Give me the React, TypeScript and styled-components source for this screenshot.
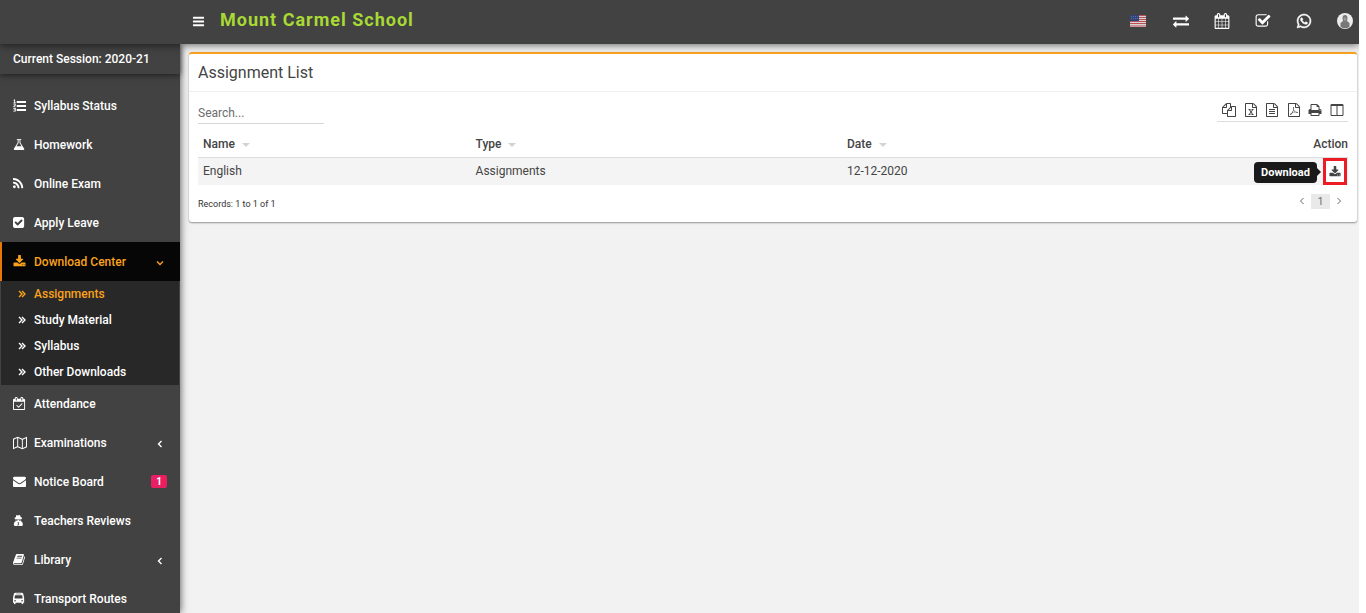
import React from "react";
import styled, { createGlobalStyle, css } from "styled-components";
import { FaWhatsapp } from "react-icons/fa";

const ORANGE = "#faa21c";

const GlobalStyle = createGlobalStyle`
  *, *::before, *::after { box-sizing: border-box; }
  html, body { margin: 0; height: 100%; overflow: hidden; background: #fff; }
  #root { height: 100%; }
  body { font-family: Roboto, "Liberation Sans", sans-serif; font-size: 12px; color: #444; }
  ul { list-style: none; margin: 0; padding: 0; }
  a { color: inherit; text-decoration: none; }
  button { font: inherit; color: inherit; background: none; border: 0; padding: 0; cursor: pointer; }
`;

/* ---------- icons (1792-unit grid) ---------- */

const PAGE =
  "M1596 380q28 28 48 76t20 88v1152q0 40-28 68t-68 28h-1344q-40 0-68-28t-28-68v-1600q0-40 28-68t68-28h896q40 0 88 20t76 48zm-444-244v376h376q-10-29-22-41l-313-313q-12-12-41-22zm384 1528v-1024h-416q-40 0-68-28t-28-68v-416h-768v1536h1280z";

const PATHS = {
  bars: "M1664 1344v128q0 26-19 45t-45 19h-1408q-26 0-45-19t-19-45v-128q0-26 19-45t45-19h1408q26 0 45 19t19 45zm0-512v128q0 26-19 45t-45 19h-1408q-26 0-45-19t-19-45v-128q0-26 19-45t45-19h1408q26 0 45 19t19 45zm0-512v128q0 26-19 45t-45 19h-1408q-26 0-45-19t-19-45v-128q0-26 19-45t45-19h1408q26 0 45 19t19 45z",
  listOl: "M512 276h1280v276h-1280zM512 827h1280v276h-1280zM512 1378h1280v276h-1280zM150 60h140v420h100v90h-340v-90h110v-260h-90v-70zM50 660h320v240l-180 160h190v90h-330v-140l200-180v-80h-200zM40 1240h340v480h-340v-90h200v-110h-140v-80h140v-110h-200z",
  exchange: "M1792 1184v192q0 13-9.5 22.5t-22.5 9.5h-1376v192q0 13-9.5 22.5t-22.5 9.5q-12 0-24-10l-319-320q-9-9-9-22 0-14 9-23l320-320q9-9 23-9 13 0 22.5 9.5t9.5 22.5v192h1376q13 0 22.5 9.5t9.5 22.5zm0-544q0 14-9 23l-320 320q-9 9-23 9-13 0-22.5-9.5t-9.5-22.5v-192h-1376q-13 0-22.5-9.5t-9.5-22.5v-192q0-13 9.5-22.5t22.5-9.5h1376v-192q0-14 9-23t23-9q12 0 24 10l319 319q9 9 9 23z",
  calendar: "M192 1664h288v-288h-288v288zm352 0h320v-288h-320v288zm-352-352h288v-320h-288v320zm352 0h320v-320h-320v320zm-352-384h288v-288h-288v288zm736 736h320v-288h-320v288zm-384-736h320v-288h-320v288zm768 736h288v-288h-288v288zm-384-352h320v-320h-320v320zm-352-864v-288q0-13-9.5-22.5t-22.5-9.5h-64q-13 0-22.5 9.5t-9.5 22.5v288q0 13 9.5 22.5t22.5 9.5h64q13 0 22.5-9.5t9.5-22.5zm736 864h288v-320h-288v320zm-384-384h320v-288h-320v288zm384 0h288v-288h-288v288zm32-480v-288q0-13-9.5-22.5t-22.5-9.5h-64q-13 0-22.5 9.5t-9.5 22.5v288q0 13 9.5 22.5t22.5 9.5h64q13 0 22.5-9.5t9.5-22.5zm384-64v1280q0 52-38 90t-90 38h-1408q-52 0-90-38t-38-90v-1280q0-52 38-90t90-38h128v-96q0-66 47-113t113-47h64q66 0 113 47t47 113v96h384v-96q0-66 47-113t113-47h64q66 0 113 47t47 113v96h128q52 0 90 38t38 90z",
  checkOutline: "M1472 930v318q0 119-84.5 203.5t-203.5 84.5h-832q-119 0-203.5-84.5t-84.5-203.5v-832q0-119 84.5-203.5t203.5-84.5h832q63 0 117 25 15 7 18 23 3 17-9 29l-49 49q-10 10-23 10-3 0-9-2-23-6-45-6h-832q-66 0-113 47t-47 113v832q0 66 47 113t113 47h832q66 0 113-47t47-113v-254q0-13 9-22l64-64q10-10 23-10 6 0 12 3 20 8 20 29zm231-489l-814 814q-24 24-57 24t-57-24l-430-430q-24-24-24-57t24-57l110-110q24-24 57-24t57 24l263 263 647-647q24-24 57-24t57 24l110 110q24 24 24 57t-24 57z",
  copy: "M1696 384q40 0 68 28t28 68v1216q0 40-28 68t-68 28h-960q-40 0-68-28t-28-68v-288h-544q-40 0-68-28t-28-68v-672q0-40 20-88t48-76l408-408q28-28 76-48t88-20h416q40 0 68 28t28 68v328q68-40 128-40h416zm-544 213l-299 299h299v-299zm-640-384l-299 299h299v-299zm196 647l316-316v-416h-384v416q0 40-28 68t-68 28h-416v640h512v-256q0-40 20-88t48-76zm956 804v-1152h-384v416q0 40-28 68t-68 28h-416v640h896z",
  excel: PAGE + "m-979-234v106h281v-106h-75l103-161q5-7 10-16.500t7.500-13.500 3.500-4h2q1 4 5 10 2 4 4.500 7.500t6 8 6.500 8.500l107 161h-76v106h291v-106h-68l-192-273 195-282h67v-107h-279v107h74l-103 159q-4 7-10 16.500t-9 13.500l-2 3h-2q-1-4-5-10-6-11-17-23l-106-159h76v-107h-290v107h68l189 272-194 283h-68z",
  text: PAGE + "m-1024-864q0-14 9-23t23-9h704q14 0 23 9t9 23v64q0 14-9 23t-23 9h-704q-14 0-23-9t-9-23v-64zm736 224q14 0 23 9t9 23v64q0 14-9 23t-23 9h-704q-14 0-23-9t-9-23v-64q0-14 9-23t23-9h704zm0 256q14 0 23 9t9 23v64q0 14-9 23t-23 9h-704q-14 0-23-9t-9-23v-64q0-14 9-23t23-9h704z",
  pdf: PAGE + "m-514-593q33 26 84 56 59-7 117-7 147 0 177 49 16 22 2 52 0 1-1 2l-2 2v1q-6 38-71 38-48 0-115-20t-130-53q-221 24-392 83-153 262-242 262-15 0-28-7l-24-12q-1-1-6-5-10-10-6-36 9-40 56-91.500t132-96.500q14-9 23 6 2 2 2 4 52-85 107-197 68-136 104-262-24-82-30.500-159.500t6.500-127.500q11-40 42-40h22q23 0 35 15 18 21 9 68-2 6-4 8 1 3 1 8v30q-2 123-14 192 55 164 146 238zm-576 411q52-24 137-158-51 40-87.500 84t-49.500 74zm398-920q-15 42-2 132 1-7 7-44 0-3 7-43 1-4 4-8-1-1-1-2-1-2-1-3-1-22-13-36 0 1-1 2v2zm-124 661q135-54 284-81-2-1-13-9.500t-16-13.500q-76-67-127-176-27 86-83 197-30 56-45 83zm646-16q-24-24-140-24 76 28 124 28 14 0 18-1 0-1-2-3z",
  print: "M448 1536h896v-256h-896v256zm0-640h896v-384h-160q-40 0-68-28t-28-68v-160h-640v640zm1152 64q0-26-19-45t-45-19-45 19-19 45 19 45 45 19 45-19 19-45zm128 0v416q0 13-9.500 22.500t-22.500 9.500h-224v160q0 40-28 68t-68 28h-960q-40 0-68-28t-28-68v-160h-224q-13 0-22.500-9.500t-9.500-22.500v-416q0-79 56.500-135.500t135.500-56.500h64v-544q0-40 28-68t68-28h672q40 0 88 20t76 48l152 152q28 28 48 76t20 88v256h64q79 0 135.500 56.500t56.500 135.500z",
  columns: "M224 1536h608v-1152h-640v1120q0 13 9.500 22.500t22.500 9.500zm1376-32v-1120h-640v1152h608q13 0 22.500-9.500t9.500-22.500zm128-1216v1216q0 66-47 113t-113 47h-1344q-66 0-113-47t-47-113v-1216q0-66 47-113t113-47h1344q66 0 113 47t47 113z",
  download: "M1344 1344q0-26-19-45t-45-19-45 19-19 45 19 45 45 19 45-19 19-45zm256 0q0-26-19-45t-45-19-45 19-19 45 19 45 45 19 45-19 19-45zm128-224v320q0 40-28 68t-68 28h-1472q-40 0-68-28t-28-68v-320q0-40 28-68t68-28h465l135 136q58 56 136 56t136-56l136-136h464q40 0 68 28t28 68zm-325-569q17 41-14 70l-448 448q-18 19-45 19t-45-19l-448-448q-31-29-14-70 17-39 59-39h256v-448q0-26 19-45t45-19h256q26 0 45 19t19 45v448h256q42 0 59 39z",
  flask: "M1591 1448q56 89 21.500 152.500t-140.500 63.500h-1152q-106 0-140.500-63.500t21.500-152.500l503-793v-399h-64q-26 0-45-19t-19-45 19-45 45-19h512q26 0 45 19t19 45-19 45-45 19h-64v399zm-779-725l-272 429h712l-272-429-20-31v-436h-128v436z",
  rss: "M576 1344q0 80-56 136t-136 56-136-56-56-136 56-136 136-56 136 56 56 136zm512 123q2 28-17 48-18 21-47 21h-135q-25 0-43-16.500t-20-41.500q-22-229-184.500-391.500t-391.500-184.500q-25-2-41.500-20t-16.500-43v-135q0-29 21-47 17-17 43-17h5q160 13 306 80.500t259 181.500q114 113 181.500 259t80.500 306zm512 2q2 27-18 47-18 20-46 20h-143q-26 0-44.500-17.500t-19.500-42.500q-12-215-101-408.500t-231.500-336-336-231.500-408.500-102q-25-1-42.500-19.500t-17.500-43.500v-143q0-28 20-46 18-18 44-18h3q262 13 501.500 120t425.500 294q187 186 294 425.500t120 501.500z",
  checkSolid: "M813 1299l614-614q19-19 19-45t-19-45l-102-102q-19-19-45-19t-45 19l-467 467-211-211q-19-19-45-19t-45 19l-102 102q-19 19-19 45t19 45l358 358q19 19 45 19t45-19zm851-883v960q0 119-84.500 203.500t-203.500 84.500h-960q-119 0-203.500-84.500t-84.500-203.500v-960q0-119 84.500-203.500t203.500-84.500h960q119 0 203.500 84.500t84.500 203.500z",
  calendarCheck: "M1303 964l-512 512q-10 9-23 9t-23-9l-288-288q-9-10-9-23t9-22l46-46q9-9 22-9t23 9l220 220 444-444q10-9 23-9t22 9l46 46q9 9 9 22t-9 23zm-1175 700h1408v-1024h-1408v1024zm384-1216v-288q0-14-9-23t-23-9h-64q-14 0-23 9t-9 23v288q0 14 9 23t23 9h64q14 0 23-9t9-23zm768 0v-288q0-14-9-23t-23-9h-64q-14 0-23 9t-9 23v288q0 14 9 23t23 9h64q14 0 23-9t9-23zm384-64v1280q0 52-38 90t-90 38h-1408q-52 0-90-38t-38-90v-1280q0-52 38-90t90-38h128v-96q0-66 47-113t113-47h64q66 0 113 47t47 113v96h384v-96q0-66 47-113t113-47h64q66 0 113 47t47 113v96h128q52 0 90 38t38 90z",
  map: "M0 352l600-256 596 256 596-256v1344l-596 256-596-256-600 256zM128 436v1066l412-176v-1066zM660 260v1066l476 204v-1066zM1256 464v1066l408-176v-1066z",
  envelope: "M1792 710v794q0 66-47 113t-113 47h-1472q-66 0-113-47t-47-113v-794q44 49 101 87 362 246 497 345 57 42 92.500 65.500t94.500 48 110 24.500h2q51 0 110-24.500t94.500-48 92.500-65.500q170-123 498-345 57-39 100-87zm0-294q0 79-49 151t-122 123q-376 261-468 325-10 7-42.500 30.500t-54 38-52 32.500-57.500 27-50 9h-2q-23 0-50-9t-57.500-27-52-32.500-54-38-42.500-30.500q-91-64-262-182.500t-205-142.500q-62-42-117-115.500t-55-136.500q0-78 41.500-130t118.500-52h1472q65 0 112.500 47t47.500 113z",
  secret: "M620 128q90 0 148 50t128 0 148-50q130 0 190 330 190 40 190 118 0 64-140 108q20 150-60 290q300 80 300 460 0 230-220 230h-816q-220 0-220-230 0-380 300-460-80-140-60-290-140-44-140-108 0-78 190-118 60-330 62-330zM560 740v90q0 90 120 90t150-110h132q30 110 150 110t120-90v-90q-336 60-672 0zM760 1120l90 130-70 370h60l56-240 56 240h60l-70-370 90-130z",
  book: "M1703 478q40 57 18 129l-275 906q-19 64-76.500 107.500t-122.500 43.500h-923q-77 0-148.500-53.500t-99.500-131.500q-24-67-2-127 0-4 3-27t4-37q1-8-3-21.500t-3-19.500q2-11 8-21t16.500-23.500 16.500-23.500q23-38 45-91.500t30-91.500q3-10 .5-30t-.5-28q3-11 17-28t17-23q21-36 42-92t25-90q1-9-2.500-32t.5-28q4-13 22-30.500t22-22.500q19-26 42.500-84.500t27.500-96.500q1-8-3-25.500t-2-26.500q2-8 9-18t18-23 17-21q8-12 16.500-30.500t15-35 16-36 19.500-32 26.500-23.500 36-11.500 47.500 5.500l-1 3q38-9 51-9h761q74 0 114 56t18 130l-274 906q-36 119-71.500 153.500t-128.500 34.500h-869q-27 0-38 15-11 16-1 43 24 70 144 70h923q29 0 56-15.500t35-41.500l300-987q7-22 5-57 38 15 59 43zm-1064 2q-4 13 2 22.500t20 9.500h608q13 0 25.500-9.500t16.500-22.500l21-64q4-13-2-22.500t-20-9.500h-608q-13 0-25.500 9.500t-16.500 22.500zm-83 256q-4 13 2 22.500t20 9.500h608q13 0 25.500-9.500t16.500-22.500l21-64q4-13-2-22.500t-20-9.500h-608q-13 0-25.500 9.500t-16.500 22.500z",
  bus: "M480 96h832q190 0 230 160l90 400q32 60 32 200v616h-128v128q0 96-112 96t-112-96v-128h-832v128q0 96-112 96t-112-96v-128h-128v-616q0-140 32-200l90-400q40-160 230-160zM560 240v80h672v-80zM430 448q-24 0-30 28l-70 364q-6 56 40 56h1052q46 0 40-56l-70-364q-6-28-30-28zM416 1088a112 112 0 1 0 0 224a112 112 0 1 0 0-224zM1376 1088a112 112 0 1 0 0 224a112 112 0 1 0 0-224z",
};

type IconName = keyof typeof PATHS;

/* Left edge of the glyph, so that narrow glyphs line up on the same side. */
const LEFT: Partial<Record<IconName, number>> = {
  flask: 64, rss: 192, checkSolid: 128, bus: 128, book: 64, secret: 160,
};

const EVEN_ODD: IconName[] = ["map", "bus", "secret"];

const Glyph = ({ name, size = 14 }: { name: IconName; size?: number }) => (
  <svg width={size} height={size} viewBox={`${LEFT[name] ?? 0} 0 1792 1792`} fill="currentColor" fillRule={EVEN_ODD.includes(name) ? "evenodd" : "nonzero"} aria-hidden="true">
    <path d={PATHS[name]} />
  </svg>
);

const Angle = ({ dir, weight = 1.4 }: { dir: "left" | "down" | "right"; weight?: number }) => (
  <svg width="8" height="8" viewBox="0 0 8 8" fill="none" stroke="currentColor" strokeWidth={weight} aria-hidden="true">
    <path d={{ left: "M5.500 1L2.500 4l3 3", down: "M1 2.500L4 5.500l3-3", right: "M2.500 1l3 3-3 3" }[dir]} />
  </svg>
);

const DoubleAngle = () => (
  <svg width="8" height="8" viewBox="0 0 8 8" fill="none" stroke="currentColor" strokeWidth="1.4" aria-hidden="true">
    <path d="M1 1l3 3-3 3M4 1l3 3-3 3" />
  </svg>
);

const Flag = () => (
  <svg width="16" height="12" viewBox="0 0 16 12" aria-hidden="true">
    <rect width="16" height="12" fill="#ddd2d2" />
    <path d="M0 .5h16M0 2.500h16M0 4.500h16M0 6.500h16M0 8.500h16M0 11h16" stroke="#b8505a" />
    <rect width="9" height="6" fill="#2f4478" />
    <path d="M1 1.500h7M1 3.500h7" stroke="#5d6d98" strokeDasharray="1 1" />
  </svg>
);

const Avatar = () => (
  <svg width="16" height="16" viewBox="0 0 16 16" aria-hidden="true">
    <circle cx="8" cy="8" r="8" fill="#ececec" />
    <path d="M8 2C6 2 5.500 3.500 5.500 5.500L6 8l-2.500 2v3.700a7 7 0 0 0 9 0V10L10 8l.5-2.500C10.500 3.500 10 2 8 2z" fill="#777" />
    <path d="M6.700 4.500h2.600v2.300L8 8.500 6.700 6.800z" fill="#999" />
  </svg>
);

/* ---------- layout ---------- */

const Page = styled.div`
  display: flex;
  flex-direction: column;
  height: 100%;
  margin-right: 7px;
  overflow: hidden;
`;

const Header = styled.header`
  display: flex;
  flex: none;
  align-items: center;
  height: 44px;
  padding: 0 6px 2px 191px;
  background: #424242;
  color: #fff;
  box-shadow: 0 1px 8px rgba(0, 0, 0, 0.6);
  z-index: 2;
`;

const MenuButton = styled.button`
  display: flex;
  padding: 0 1px;
  margin-right: 14px;
`;

const School = styled.a`
  color: #a9d935;
  font-size: 18px;
  font-weight: 700;
  line-height: 24px;
  letter-spacing: 1px;
  padding-bottom: 2px;
`;

const Tools = styled.nav`
  display: flex;
  align-items: center;
  gap: 25px;
  margin-left: auto;
  button { display: flex; }
`;

const LanguageButton = styled.button`
  padding-right: 2px;
`;

const Body = styled.div`
  display: flex;
  flex: 1;
  min-height: 0;
`;

const Sidebar = styled.aside`
  flex: none;
  width: 180px;
  background: #424242;
  color: #fff;
  font-weight: 500;
  box-shadow: 0 0 8px rgba(0, 0, 0, 0.7);
  z-index: 1;
`;

const Session = styled.div`
  height: 30px;
  padding-left: 13px;
  line-height: 30px;
  box-shadow: 0 1px 6px rgba(0, 0, 0, 0.6);
  margin-bottom: 12px;
`;

const NavLink = styled.a<{ $active?: boolean }>`
  display: flex;
  align-items: center;
  height: 39px;
  padding: 0 13px 0 11px;
  border-left: 2px solid transparent;
  ${(p) => p.$active && css`
    background: #060606;
    border-color: #e77808;
    color: ${ORANGE};
  `}
`;

const NavIcon = styled.span`
  display: flex;
  width: 21px;
`;

const Chevron = styled.span`
  display: flex;
  margin-left: auto;
  padding: 2px 3px 0;
`;

const Badge = styled.span`
  margin-left: auto;
  width: 16px;
  border-radius: 2px;
  background: #e91e63;
  font-size: 10px;
  font-weight: 700;
  line-height: 13px;
  text-align: center;
`;

const SubMenu = styled.ul`
  margin: 0 1px -1px;
  background: #282828;
`;

const SubLink = styled.a<{ $active?: boolean }>`
  display: flex;
  align-items: center;
  gap: 8px;
  height: 26px;
  padding: 0 0 1px 17px;
  color: ${(p) => (p.$active ? ORANGE : "#fff")};
`;

const Main = styled.main`
  flex: 1;
  min-width: 0;
  padding: 8px 2px 0 9px;
  background: #f2f2f2;
`;

const Card = styled.section`
  border-top: 2px solid ${ORANGE};
  border-radius: 3px;
  background: #fff;
  box-shadow: 0 1px 2px rgba(0, 0, 0, 0.4);
`;

const CardTitle = styled.h1`
  margin: 0;
  padding: 0 9px;
  border-bottom: 1px solid #f0f0f0;
  font-size: 16px;
  font-weight: 400;
  line-height: 37px;
`;

const CardBody = styled.div`
  padding: 10px 9px 7px;
`;

const Bar = styled.div`
  display: flex;
  justify-content: space-between;
  align-items: flex-start;
`;

const Search = styled.input`
  width: 126px;
  height: 22px;
  padding: 0;
  border: 0;
  border-bottom: 1px solid #d6d6d6;
  outline: 0;
  background: none;
  font: inherit;
  color: inherit;
  &::placeholder { color: #6c6c6c; opacity: 1; }
`;

const Exports = styled.div`
  display: flex;
  justify-content: space-between;
  width: 131px;
  height: 20px;
  padding: 1px 4px 0 5px;
  border-bottom: 1px solid #ddd;
  button { display: flex; height: 14px; }
`;

const Table = styled.table`
  width: 100%;
  margin-top: 6px;
  border-collapse: collapse;
  table-layout: fixed;
`;

const Th = styled.th<{ $width?: string; $right?: boolean }>`
  width: ${(p) => p.$width ?? "auto"};
  height: 27px;
  padding: 2px ${(p) => (p.$right ? 0 : 5)}px 0 5px;
  border-bottom: 1px solid #ddd;
  font-weight: 500;
  text-align: ${(p) => (p.$right ? "right" : "left")};
`;

const SortMark = styled.span`
  display: inline-block;
  margin-left: 7px;
  border: 4px solid transparent;
  border-top-color: #d3d3d3;
  border-bottom: 0;
  vertical-align: 1px;
`;

const Td = styled.td`
  height: 27px;
  padding: 0 5px;
  background: #f4f4f4;
`;

const ActionTd = styled(Td)`
  padding: 0 1px 0 5px;
`;

const Action = styled.div`
  position: relative;
  display: flex;
  justify-content: flex-end;
`;

const DownloadButton = styled.button`
  display: flex;
  align-items: center;
  justify-content: center;
  width: 24px;
  height: 27px;
  padding: 1px 1px 0 0;
  border: 3px solid #ed1c24;
  background: #fff;
`;

const Tooltip = styled.span`
  position: absolute;
  top: 4px;
  right: 30px;
  width: 63px;
  border-radius: 4px;
  background: #1a1a1a;
  color: #fff;
  font-size: 11px;
  font-weight: 700;
  line-height: 21px;
  text-align: center;
  &::after {
    content: "";
    position: absolute;
    left: 100%;
    top: 6px;
    border: 4px solid transparent;
    border-left-color: #1a1a1a;
    border-right: 0;
  }
`;

const Footer = styled.div`
  display: flex;
  justify-content: space-between;
  align-items: center;
  margin-top: 9px;
  font-size: 9px;
  line-height: 15px;
  color: #333;
`;

const Pager = styled.nav`
  display: flex;
  align-items: center;
  gap: 5px;
  padding-right: 5px;
  margin-bottom: 6px;
  color: #666;
  button { display: flex; }
`;

const PageNumber = styled.button`
  justify-content: center;
  width: 19px;
  background: #e9e9e9;
  font-size: 10px;
`;

/* ---------- data ---------- */

type Item = { label: string; icon: IconName; arrow?: "left" | "down"; badge?: number; children?: string[] };

const ITEMS: Item[] = [
  { label: "Syllabus Status", icon: "listOl" },
  { label: "Homework", icon: "flask" },
  { label: "Online Exam", icon: "rss" },
  { label: "Apply Leave", icon: "checkSolid" },
  { label: "Download Center", icon: "download", arrow: "down", children: ["Assignments", "Study Material", "Syllabus", "Other Downloads"] },
  { label: "Attendance", icon: "calendarCheck" },
  { label: "Examinations", icon: "map", arrow: "left" },
  { label: "Notice Board", icon: "envelope", badge: 1 },
  { label: "Teachers Reviews", icon: "secret" },
  { label: "Library", icon: "book", arrow: "left" },
  { label: "Transport Routes", icon: "bus" },
];

const EXPORTS: [string, IconName][] = [
  ["Copy", "copy"], ["Excel", "excel"], ["CSV", "text"], ["PDF", "pdf"], ["Print", "print"], ["Columns", "columns"],
];

export default function App() {
  return (
    <>
      <GlobalStyle />
      <Page>
        <Header>
          <MenuButton aria-label="Toggle menu"><Glyph name="bars" size={13} /></MenuButton>
          <School href="#">Mount Carmel School</School>
          <Tools>
            <LanguageButton aria-label="Language"><Flag /></LanguageButton>
            <button aria-label="Switch"><Glyph name="exchange" size={16} /></button>
            <button aria-label="Calendar"><Glyph name="calendar" size={16} /></button>
            <button aria-label="Tasks"><Glyph name="checkOutline" size={16} /></button>
            <button aria-label="Chat"><FaWhatsapp size={16} stroke="currentColor" strokeWidth={16} /></button>
            <button aria-label="Profile"><Avatar /></button>
          </Tools>
        </Header>
        <Body>
          <Sidebar>
            <Session>Current Session: 2020-21</Session>
            <ul>
              {ITEMS.map((item) => (
                <li key={item.label}>
                  <NavLink href="#" $active={!!item.children}>
                    <NavIcon><Glyph name={item.icon} size={item.icon === "map" ? 14 : 13} /></NavIcon>
                    {item.label}
                    {item.arrow && <Chevron><Angle dir={item.arrow} /></Chevron>}
                    {item.badge && <Badge>{item.badge}</Badge>}
                  </NavLink>
                  {item.children && (
                    <SubMenu>
                      {item.children.map((label, i) => (
                        <li key={label}>
                          <SubLink href="#" $active={i === 0}><DoubleAngle />{label}</SubLink>
                        </li>
                      ))}
                    </SubMenu>
                  )}
                </li>
              ))}
            </ul>
          </Sidebar>
          <Main>
            <Card>
              <CardTitle>Assignment List</CardTitle>
              <CardBody>
                <Bar>
                  <Search type="search" placeholder="Search..." aria-label="Search" />
                  <Exports>
                    {EXPORTS.map(([label, icon]) => (
                      <button key={label} aria-label={label}><Glyph name={icon} size={14} /></button>
                    ))}
                  </Exports>
                </Bar>
                <Table>
                  <thead>
                    <tr>
                      <Th $width="23.7%">Name<SortMark /></Th>
                      <Th $width="32.3%">Type<SortMark /></Th>
                      <Th>Date<SortMark /></Th>
                      <Th $right>Action</Th>
                    </tr>
                  </thead>
                  <tbody>
                    <tr>
                      <Td>English</Td>
                      <Td>Assignments</Td>
                      <Td>12-12-2020</Td>
                      <ActionTd>
                        <Action>
                          <Tooltip role="tooltip">Download</Tooltip>
                          <DownloadButton aria-label="Download"><Glyph name="download" size={12} /></DownloadButton>
                        </Action>
                      </ActionTd>
                    </tr>
                  </tbody>
                </Table>
                <Footer>
                  <span>Records: 1 to 1 of 1</span>
                  <Pager aria-label="Pages">
                    <button aria-label="Previous"><Angle dir="left" weight={1} /></button>
                    <PageNumber>1</PageNumber>
                    <button aria-label="Next"><Angle dir="right" weight={1} /></button>
                  </Pager>
                </Footer>
              </CardBody>
            </Card>
          </Main>
        </Body>
      </Page>
    </>
  );
}
